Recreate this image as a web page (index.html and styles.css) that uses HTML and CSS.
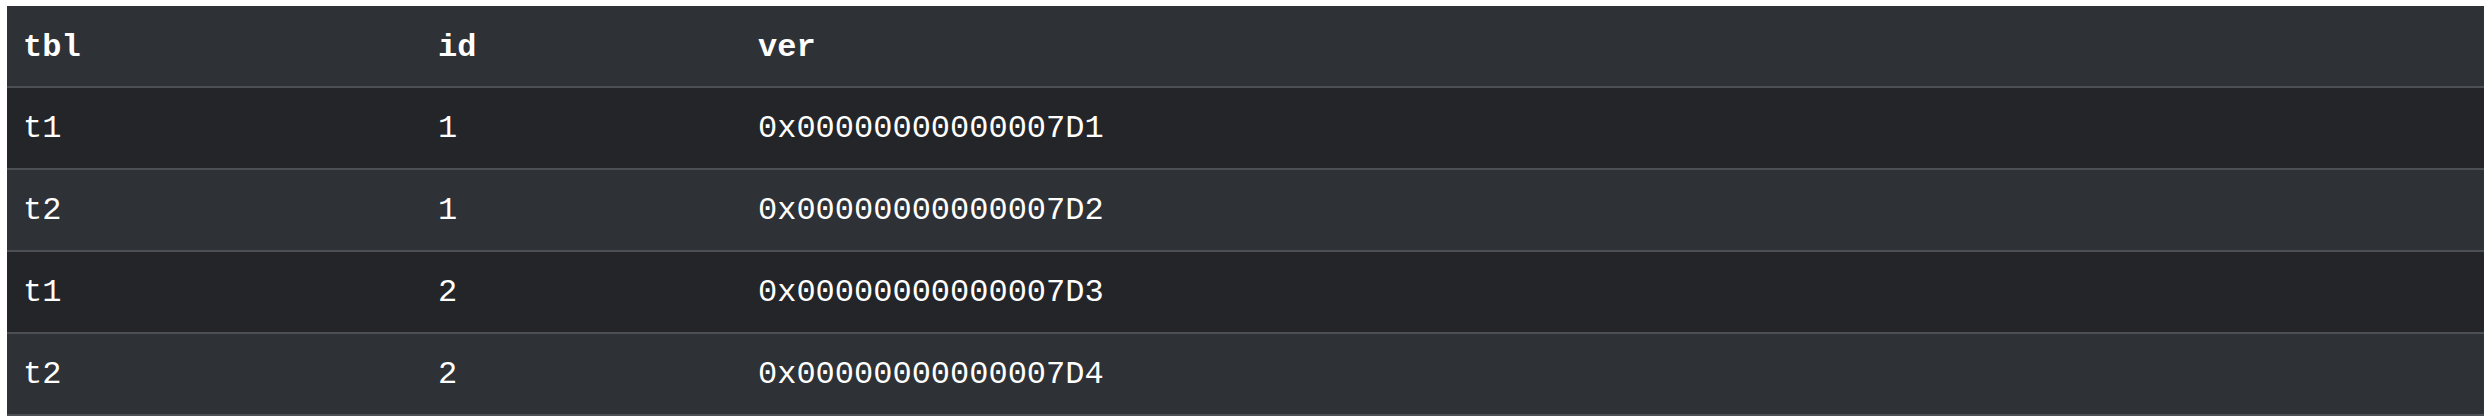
FILE: index.html
```html
<!DOCTYPE html>
<html>
<head>
<meta charset="utf-8">
<link rel="stylesheet" href="styles.css">
</head>
<body>
<table class="grid">
  <thead>
    <tr><th class="c1">tbl</th><th class="c2">id</th><th class="c3">ver</th></tr>
  </thead>
  <tbody>
    <tr class="odd"><td>t1</td><td>1</td><td>0x00000000000007D1</td></tr>
    <tr class="even"><td>t2</td><td>1</td><td>0x00000000000007D2</td></tr>
    <tr class="odd"><td>t1</td><td>2</td><td>0x00000000000007D3</td></tr>
    <tr class="even"><td>t2</td><td>2</td><td>0x00000000000007D4</td></tr>
  </tbody>
</table>
</body>
</html>
```
FILE: styles.css
```css
html, body {
  margin: 0;
  background: #ffffff;
}
body {
  padding: 6px 0 0 7px;
}
.grid {
  width: 100%;
  border-collapse: collapse;
  font-family: "Liberation Mono", "Courier New", monospace;
  font-size: 32px;
  color: #ffffff;
  table-layout: fixed;
}
.grid th, .grid td {
  padding: 0 0 0 16px;
  text-align: left;
  vertical-align: middle;
  white-space: nowrap;
}
.grid th {
  height: 77px;
  padding-top: 3px;
  font-weight: bold;
  background: #2e3136;
  border-bottom: 2px solid #4c5055;
}
.grid td {
  height: 79px;
  padding-top: 1px;
  border-bottom: 2px solid #4c5055;
}
.grid .c1 { width: 399px; }
.grid .c2 { width: 304px; }
.odd td { background: #232529; }
.even td { background: #2e3136; }
```
